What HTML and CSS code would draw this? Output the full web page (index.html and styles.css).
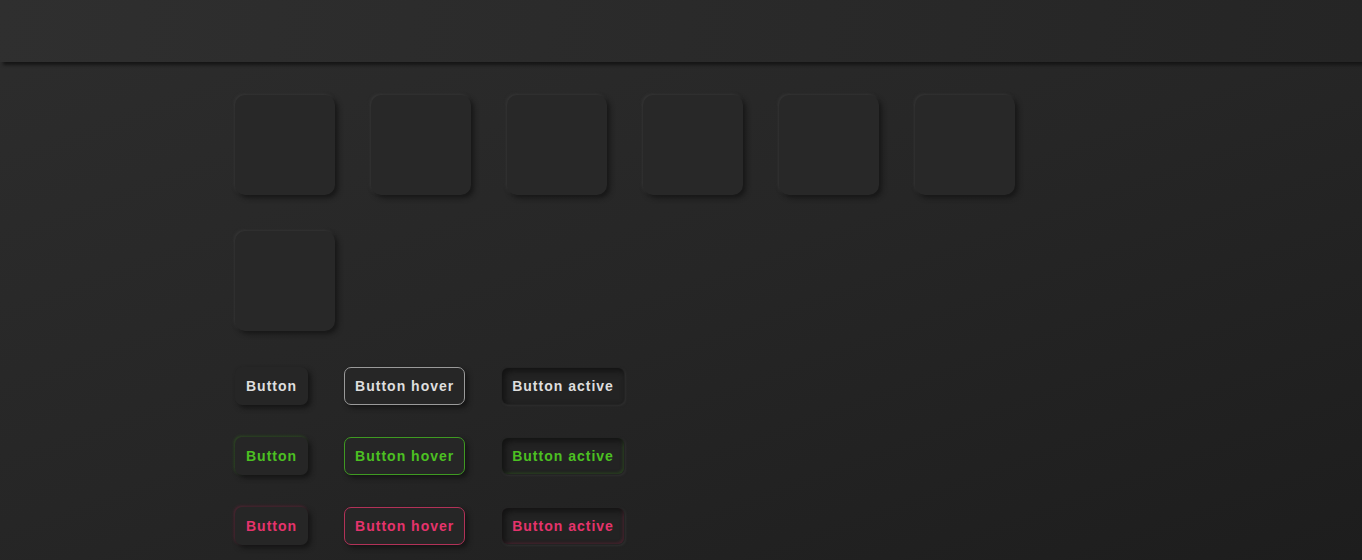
FILE: index.html
```html
<!DOCTYPE html>
<html>
<head>
<meta charset="utf-8">
<link rel="stylesheet" href="styles.css">
</head>
<body>
<header class="topbar"></header>
<main class="content">
  <div class="tiles">
    <div class="tile"></div>
    <div class="tile"></div>
    <div class="tile"></div>
    <div class="tile"></div>
    <div class="tile"></div>
    <div class="tile"></div>
    <div class="tile"></div>
  </div>
  <div class="btn-row">
    <button class="btn">Button</button>
    <button class="btn hover">Button hover</button>
    <button class="btn active">Button active</button>
  </div>
  <div class="btn-row green">
    <button class="btn">Button</button>
    <button class="btn hover">Button hover</button>
    <button class="btn active">Button active</button>
  </div>
  <div class="btn-row pink">
    <button class="btn">Button</button>
    <button class="btn hover">Button hover</button>
    <button class="btn active">Button active</button>
  </div>
</main>
</body>
</html>
```
FILE: styles.css
```css
html, body {
  margin: 0;
  height: 100%;
}
body {
  background: linear-gradient(160deg, #2d2d2d 0%, #262626 50%, #1d1d1d 100%);
  font-family: "Liberation Sans", Arial, sans-serif;
  overflow: hidden;
}
.topbar {
  height: 62px;
  background: linear-gradient(100deg, #2f2f2f 0%, #292929 60%, #252525 100%);
  box-shadow: 3px 3px 3px #161616;
}
.content {
  padding: 33px 0 0 235px;
}
.tiles {
  display: flex;
  flex-wrap: wrap;
  gap: 36px;
  width: 820px;
}
.tile {
  width: 100px;
  height: 100px;
  border-radius: 10px;
  background: #282828;
  box-shadow: 3px 3px 5px #171717, -1px -1px 3px #383838;
}
.btn-row {
  display: flex;
  gap: 36px;
  margin-top: 36px;
  --c: #dedede;
  --b: #9a9a9a;
  --g: rgba(0,0,0,0);
}
.btn-row + .btn-row {
  margin-top: 32px;
}
.btn-row.green {
  --c: #4cc022;
  --b: #3f9a22;
  --g: rgba(70,170,30,0.3);
}
.btn-row.pink {
  --c: #e5336c;
  --b: #b23258;
  --g: rgba(200,40,90,0.3);
}
.btn {
  font-family: "Liberation Sans", Arial, sans-serif;
  font-size: 14px;
  font-weight: bold;
  letter-spacing: 1px;
  line-height: 18px;
  color: var(--c);
  background: #262626;
  border: 1px solid transparent;
  border-radius: 7px;
  padding: 9px 10px;
  box-shadow: 3px 3px 5px #151515, -1px -1px 3px var(--g);
}
.btn.hover {
  border-color: var(--b);
  box-shadow: 3px 3px 5px #151515;
}
.btn.active {
  background: #232323;
  box-shadow: inset 3px 3px 6px #121212, inset -1px -1px 3px var(--g), 1px 1px 2px #2e2e2e;
}
```
